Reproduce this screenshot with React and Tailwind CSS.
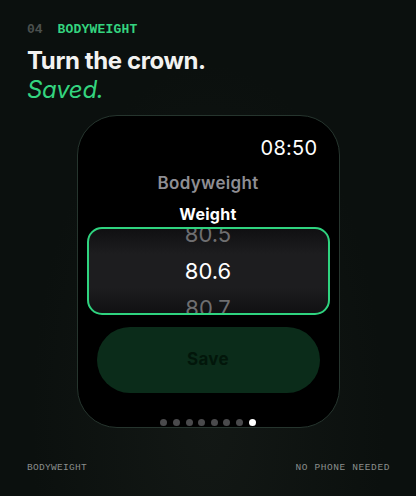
const mono = { fontFamily: '"Liberation Mono", "DejaVu Sans Mono", monospace' };

function Picker() {
  return (
    <div className="mx-[9px] h-[88px] rounded-[15px] border-2 border-[#2fd37f] overflow-hidden bg-[linear-gradient(180deg,#101012_0%,#1d1d1f_30%,#1d1d1f_70%,#101012_100%)] flex flex-col items-center justify-center">
      <div className="h-[37px] leading-[37px] text-[22px] text-[#6e6e70] shrink-0">80.5</div>
      <div className="h-[37px] leading-[37px] text-[22px] text-white shrink-0">80.6</div>
      <div className="h-[37px] leading-[37px] text-[22px] text-[#6e6e70] shrink-0">80.7</div>
    </div>
  );
}

function Dots() {
  return (
    <div className="flex justify-center gap-[5.6px] mt-[26px]">
      {[0, 1, 2, 3, 4, 5, 6].map((i) => (
        <span key={i} className="w-[7px] h-[7px] rounded-full bg-[#4a4a4c]" />
      ))}
      <span className="w-[7px] h-[7px] rounded-full bg-white" />
    </div>
  );
}

export default function App() {
  return (
    <div className="w-[416px] h-[496px] flex flex-col px-[27px] pt-[22px] bg-[#0b100e] bg-[radial-gradient(ellipse_at_50%_85%,#131815_0%,#0b100e_60%)] text-white" style={{ fontFamily: 'Inter, "Liberation Sans", sans-serif' }}>
      <div className="flex items-center gap-[15px] text-[13px] font-bold h-[16px]" style={mono}>
        <span className="text-[#4b504e]">04</span>
        <span className="text-[#34d47f] tracking-[0.2px]">BODYWEIGHT</span>
      </div>

      <h1 className="mt-[8px] text-[24px] leading-[29px] font-bold tracking-[-0.4px] text-[#f2f2f0]">Turn the crown.</h1>
      <p className="text-[24px] leading-[29px] italic text-[#34d47f] tracking-[-0.3px]">Saved.</p>

      <div className="mt-[11px] mx-auto w-[263px] h-[313px] rounded-[40px] border border-[#26352e] bg-black flex flex-col">
        <div className="text-right pr-[21px] pt-[20px] text-[20px] leading-[25px] tracking-[0.3px]">08:50</div>
        <div className="mt-[11px] text-center text-[17px] leading-[22px] font-semibold text-[#8e8e93] tracking-[0.3px]">Bodyweight</div>
        <div className="mt-[11px] text-center text-[16px] leading-[18px] font-bold tracking-[0.3px]">Weight</div>
        <div className="mt-[4px]">
          <Picker />
        </div>
        <button className="mt-[12px] mx-[19px] h-[66px] shrink-0 rounded-full bg-[#0b2c1a] text-[#02160a] text-[17px] font-bold tracking-[0.3px]">Save</button>
        <Dots />
      </div>

      <div className="mt-auto mb-[21px] flex justify-between text-[9.5px] text-[#8a8e8c] tracking-[0.3px]" style={mono}>
        <span>BODYWEIGHT</span>
        <span className="mr-[-1px] tracking-[0.6px]">NO PHONE NEEDED</span>
      </div>
    </div>
  );
}
